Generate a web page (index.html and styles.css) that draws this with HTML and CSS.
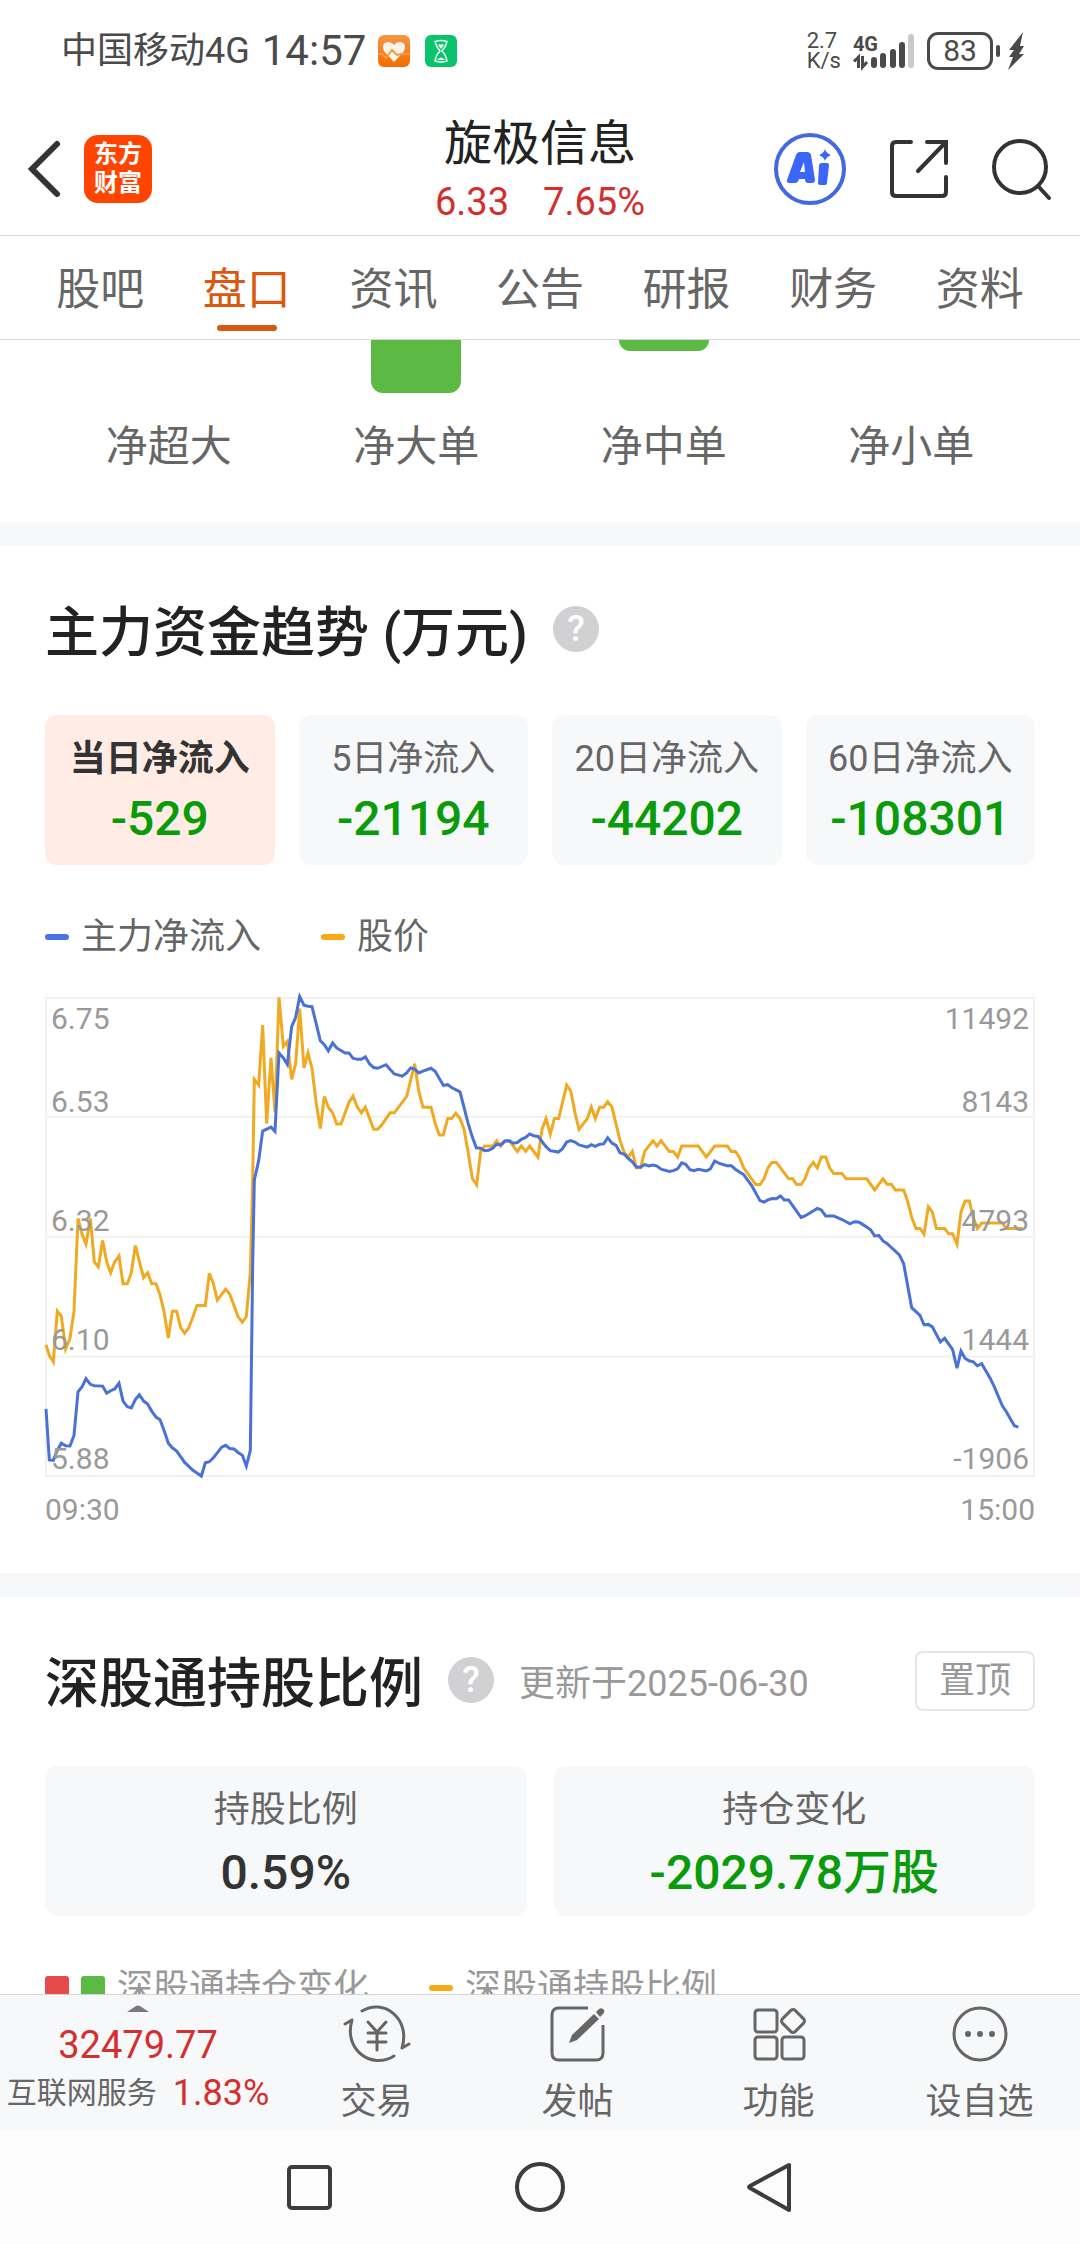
FILE: index.html
```html
<!DOCTYPE html>
<html lang="zh-CN">
<head>
<meta charset="utf-8">
<meta name="viewport" content="width=device-width, initial-scale=1">
<title>旋极信息</title>
<link rel="stylesheet" href="styles.css">
</head>
<body>
<div class="app">
  <div class="status">
    <div class="status-left">
      <span class="carrier">中国移动4G</span>
      <time class="clock">14:57</time>
      <svg class="notice" viewBox="0 0 32 32" aria-hidden="true">
        <defs><linearGradient id="heat" x1="0" y1="0" x2="0" y2="1"><stop offset="0" stop-color="#f79646"/><stop offset="1" stop-color="#f46c00"/></linearGradient></defs>
        <rect width="32" height="32" rx="6" fill="url(#heat)"/>
        <path d="M16 27 7 17.500C2.500 11.500 6 7 10 7c3 0 5 1.500 6 3 1-1.500 3-3 6-3 4 0 7.500 4.500 3 10.500z" fill="#fbf3ea"/>
        <path d="M0 19h4l4 4 6-8 5 5 4-1h9" fill="none" stroke="#f79a3c" stroke-width="2"/>
      </svg>
      <svg class="notice" viewBox="0 0 32 32" aria-hidden="true">
        <rect width="32" height="32" rx="6" fill="#0ac46c"/>
        <path d="M10 6.500q6-2 12 0-1 5-5 9.500 4 4 5 10-6 2-12 0 1-6 5-10-4-4.500-5-9.500z" fill="none" stroke="#eafff2" stroke-width="1.500"/>
        <path d="m13 10 3 4 3-4-2-1-1 1-1-1zM12 25q4-5 8 0z" fill="#eafff2"/>
      </svg>
    </div>
    <div class="status-right">
      <div class="speed"><span>2.7</span><span>K/s</span></div>
      <div class="network">
        <div class="network-type"><span>4G</span>
          <svg class="arrows" viewBox="0 0 16 12" aria-hidden="true"><path d="M5.500 12V1L1 5.500M9.500 0v11L14 6" fill="none" stroke="#4a4a4a" stroke-width="3"/></svg>
        </div>
        <svg class="bars" viewBox="0 0 44 36" aria-hidden="true"><g fill="#4a4a4a"><rect x="0" y="24" width="6" height="11" rx="3"/><rect x="9" y="20" width="6" height="15" rx="3"/><rect x="19" y="16" width="6" height="19" rx="3"/><rect x="28" y="9" width="6" height="26" rx="3"/></g><rect x="37" y="1" width="6" height="34" rx="3" fill="#c9c9c9"/></svg>
      </div>
      <div class="power">
        <span class="battery">83</span><span class="nub"></span>
        <svg class="bolt" viewBox="0 0 17 38" aria-hidden="true"><path d="M15 0 1 18h5L1 25h4L0 38 16 22h-5l5-8h-4z" fill="#4a4a4a"/></svg>
      </div>
    </div>
  </div>

  <header class="header">
    <div class="header-side">
      <button class="icon-button" type="button" aria-label="返回"><svg class="back" viewBox="0 0 32 56"><path d="M29 3 4 28l25 25" fill="none" stroke="#333" stroke-width="6" stroke-linecap="round"/></svg></button>
      <a class="brand" href="#home">东方<br>财富</a>
    </div>
    <div class="title">
      <h1>旋极信息</h1>
      <p class="quote up"><span>6.33</span><span>7.65%</span></p>
    </div>
    <div class="header-side header-actions">
      <button class="icon-button" type="button" aria-label="智能助手"><svg class="assistant" viewBox="0 0 72 72">
        <circle cx="36" cy="36" r="34" fill="none" stroke="#4468e2" stroke-width="4"/>
        <path fill="#3a66fc" fill-rule="evenodd" d="M22 22q1-3 4-3h7q3 0 4 3l4 25q0 3-3 3h-4q-3 0-3-4h-6q-1 4-4 4h-5q-4 0-3-3zM26 39h5l-1-10zM48 30h5q2 0 2 2l-2 18q0 2-2 2h-5q-2 0-2-2l1-17q0-3 3-3zM51 16q1 4 6 6-5 2-6 6-1-4-6-6 5-2 6-6z"/>
      </svg></button>
      <button class="icon-button" type="button" aria-label="分享"><svg class="share" viewBox="0 0 58 58"><path d="M21 2H6Q2 2 2 6v46q0 4 4 4h46q4 0 4-4V37M37 2h19v21M55 3 28 31" fill="none" stroke="#333" stroke-width="4" stroke-linecap="round"/></svg></button>
      <button class="icon-button" type="button" aria-label="搜索"><svg class="search" viewBox="0 0 60 62"><circle cx="28" cy="29" r="26" fill="none" stroke="#333" stroke-width="4"/><path d="m46 48 11 12" stroke="#333" stroke-width="4" stroke-linecap="round"/></svg></button>
    </div>
  </header>

  <nav class="tabs" aria-label="个股栏目">
    <a href="#guba">股吧</a>
    <a class="active" href="#pankou" aria-current="page">盘口</a>
    <a href="#zixun">资讯</a>
    <a href="#gonggao">公告</a>
    <a href="#yanbao">研报</a>
    <a href="#caiwu">财务</a>
    <a href="#ziliao">资料</a>
  </nav>

  <main class="content">
    <section class="orders" aria-label="净单">
      <div class="order"><div class="order-slot"></div><span>净超大</span></div>
      <div class="order"><div class="order-slot"><i class="order-bar" style="height:100%"></i></div><span>净大单</span></div>
      <div class="order"><div class="order-slot"><i class="order-bar" style="height:21%"></i></div><span>净中单</span></div>
      <div class="order"><div class="order-slot"></div><span>净小单</span></div>
    </section>

    <section class="panel">
      <div class="panel-head">
        <h2>主力资金趋势 (万元)</h2>
        <button class="help" type="button" aria-label="说明">?</button>
      </div>
      <div class="cards cards-four">
        <button class="card selected" type="button"><span class="card-label">当日净流入</span><span class="card-value down">-529</span></button>
        <button class="card" type="button"><span class="card-label">5日净流入</span><span class="card-value down">-21194</span></button>
        <button class="card" type="button"><span class="card-label">20日净流入</span><span class="card-value down">-44202</span></button>
        <button class="card" type="button"><span class="card-label">60日净流入</span><span class="card-value down">-108301</span></button>
      </div>
      <div class="legend">
        <span class="legend-item"><i class="dash blue"></i>主力净流入</span>
        <span class="legend-item"><i class="dash amber"></i>股价</span>
      </div>
      <div class="chart">
        <svg class="plot" viewBox="48 50 2964 1340" preserveAspectRatio="none" role="img" aria-label="主力净流入与股价走势">
          <path class="grid" d="M48 50H3012V1390H48zM48 383H3012M48 719H3012M48 1055H3012"/>
          <polyline class="line price" points="48,1022 58,1052 70,1070 82,928 94,942 107,1034 120,1004 132,928 144,668 156,712 168,740 181,668 193,790 205,804 218,730 230,790 242,820 254,790 267,773 279,851 292,851 304,820 316,744 328,788 341,834 353,820 365,851 378,851 390,882 402,928 415,1003 427,928 440,928 452,974 464,990 476,975 489,943 501,912 526,912 538,822 550,851 562,897 587,866 599,880 624,943 637,959 649,943 661,820 668,560 673,278 686,294 698,126 710,402 723,218 735,370 747,48 760,186 772,172 785,278 797,234 809,80 822,246 834,204 846,248 858,340 871,416 883,326 895,356 908,372 920,403 933,403 957,342 969,325 982,356 994,372 1006,356 1031,418 1043,418 1055,406 1080,372 1093,372 1130,326 1154,234 1166,310 1179,356 1203,356 1216,403 1228,434 1240,434 1253,388 1265,388 1277,373 1290,388 1302,418 1314,480 1327,556 1340,574 1352,480 1364,465 1388,465 1400,450 1412,465 1425,450 1438,450 1462,480 1474,465 1487,480 1499,465 1524,496 1536,418 1548,388 1561,432 1573,388 1586,388 1610,294 1622,310 1635,372 1647,418 1672,388 1684,356 1696,388 1709,356 1721,356 1733,341 1746,356 1770,450 1783,484 1795,496 1807,480 1819,526 1832,526 1844,480 1869,450 1881,465 1893,450 1918,480 1930,480 1943,496 1955,465 2005,465 2029,496 2054,465 2092,465 2104,480 2116,480 2128,496 2141,526 2177,573 2190,573 2202,557 2214,526 2226,511 2239,511 2276,557 2288,557 2300,573 2313,573 2325,557 2337,526 2350,511 2362,526 2374,496 2387,496 2399,526 2411,542 2436,542 2448,557 2510,557 2534,588 2559,557 2571,572 2584,572 2596,588 2621,588 2633,620 2645,665 2658,696 2670,696 2682,712 2695,635 2707,650 2719,696 2744,696 2756,711 2768,711 2781,740 2793,650 2805,619 2818,619 2830,666 2842,696 2855,681 2917,681 2929,696 2978,696"/>
          <polyline class="line flow" points="48,1202 58,1345 70,1346 82,1318 94,1298 107,1305 120,1306 132,1276 144,1154 156,1140 168,1117 181,1133 193,1137 218,1138 230,1158 242,1151 254,1146 267,1130 279,1180 292,1196 304,1199 316,1176 328,1162 341,1180 353,1188 365,1208 378,1225 390,1232 402,1262 415,1298 427,1311 440,1320 464,1352 489,1374 514,1390 526,1353 538,1350 550,1339 575,1309 587,1304 599,1313 612,1314 624,1324 637,1332 649,1362 661,1318 668,800 673,560 686,506 698,423 723,412 735,424 747,204 760,218 772,236 785,130 797,104 809,46 822,70 834,73 846,74 858,120 871,170 883,181 895,198 908,176 920,190 945,204 957,204 969,219 982,222 994,222 1006,215 1019,235 1031,245 1043,247 1068,237 1080,250 1093,263 1117,269 1130,260 1142,246 1154,249 1166,260 1179,255 1203,247 1216,256 1240,295 1253,293 1265,301 1290,313 1314,400 1327,440 1339,470 1352,471 1364,478 1376,477 1388,471 1400,460 1412,462 1425,451 1438,450 1450,457 1462,455 1474,446 1487,441 1499,431 1511,436 1524,438 1548,467 1561,478 1585,482 1597,473 1610,454 1622,450 1635,454 1647,462 1672,468 1684,461 1696,466 1709,460 1721,459 1733,442 1746,457 1758,463 1770,484 1783,488 1795,500 1807,509 1819,524 1832,524 1844,517 1856,521 1869,518 1881,521 1893,530 1918,536 1930,534 1943,529 1955,512 1967,516 1980,531 1992,534 2005,530 2029,535 2041,529 2054,507 2066,513 2091,520 2104,520 2116,530 2128,538 2141,545 2165,576 2190,618 2202,622 2214,616 2226,612 2239,613 2251,605 2263,616 2276,616 2288,632 2313,665 2325,661 2362,640 2374,644 2387,661 2411,661 2436,671 2460,683 2473,677 2485,678 2497,684 2522,700 2534,717 2547,716 2559,731 2571,738 2608,770 2621,795 2645,918 2670,940 2682,966 2695,965 2707,972 2731,1014 2744,1004 2768,1036 2781,1088 2793,1040 2805,1060 2817,1067 2830,1070 2842,1081 2855,1075 2880,1115 2892,1138 2917,1193 2929,1210 2953,1249 2965,1253"/>
        </svg>
        <div class="axis">
          <div class="axis-row"><span>6.75</span><span>6.53</span></div>
          <div class="axis-row"><span>6.32</span></div>
          <div class="axis-row"><span>6.10</span></div>
          <div class="axis-row"><span>5.88</span></div>
        </div>
        <div class="axis axis-right">
          <div class="axis-row"><span>11492</span><span>8143</span></div>
          <div class="axis-row"><span>4793</span></div>
          <div class="axis-row"><span>1444</span></div>
          <div class="axis-row"><span>-1906</span></div>
        </div>
      </div>
      <div class="times"><span>09:30</span><span>15:00</span></div>
    </section>

    <section class="panel">
      <div class="panel-head">
        <h2>深股通持股比例</h2>
        <button class="help" type="button" aria-label="说明">?</button>
        <span class="updated">更新于2025-06-30</span>
        <button class="pin" type="button">置顶</button>
      </div>
      <div class="cards cards-two">
        <div class="card"><span class="card-label">持股比例</span><span class="card-value">0.59%</span></div>
        <div class="card"><span class="card-label">持仓变化</span><span class="card-value down">-2029.78万股</span></div>
      </div>
      <div class="legend legend-holding">
        <span class="legend-item"><i class="square red"></i><i class="square green"></i>深股通持仓变化</span>
        <span class="legend-item"><i class="dash amber"></i>深股通持股比例</span>
      </div>
    </section>
  </main>

  <footer class="toolbar">
    <button class="index" type="button">
      <svg class="caret" viewBox="0 0 22 7" aria-hidden="true"><path d="m0 7 9-6q2-1 4 0l9 6z" fill="#7b7b7d"/></svg>
      <span class="index-value up">32479.77</span>
      <span class="index-line">互联网服务<b class="index-change up">1.83%</b></span>
    </button>
    <button class="tool" type="button">
      <svg viewBox="0 0 66 60" aria-hidden="true"><g fill="none" stroke="#666" stroke-width="3" stroke-linecap="round" stroke-linejoin="round"><path d="M18 7C39-6 67 14 58 44l7-4M50 52C28 66-1 46 8 16l-7 4"/><path d="m24 18 9 10 9-10M33 28v18M24 29h18M24 38h18"/></g></svg>
      <span>交易</span>
    </button>
    <button class="tool" type="button">
      <svg viewBox="0 0 66 60" aria-hidden="true"><path d="M43 4H14q-7 0-7 7v38q0 7 7 7h37q7 0 7-7V21" fill="none" stroke="#666" stroke-width="3"/><path d="m24 39 3-8 22-21 5 5-22 21zM51 8l3-3q3-2 5 1 1 2-1 4l-3 3z" fill="#666"/></svg>
      <span>发帖</span>
    </button>
    <button class="tool" type="button">
      <svg viewBox="0 0 66 60" aria-hidden="true"><g fill="none" stroke="#666" stroke-width="3"><rect x="9" y="6" width="22" height="22" rx="3"/><rect x="9" y="33" width="22" height="22" rx="3"/><rect x="36" y="33" width="22" height="22" rx="3"/><rect x="-9" y="-9" width="18" height="18" rx="3" transform="translate(47 17) rotate(45)"/></g></svg>
      <span>功能</span>
    </button>
    <button class="tool" type="button">
      <svg viewBox="0 0 66 60" aria-hidden="true"><circle cx="33" cy="30" r="26" fill="none" stroke="#666" stroke-width="3"/><g fill="#666"><circle cx="21" cy="30" r="3"/><circle cx="33" cy="30" r="3"/><circle cx="45" cy="30" r="3"/></g></svg>
      <span>设自选</span>
    </button>
  </footer>

  <div class="system">
    <button class="icon-button" type="button" aria-label="最近任务"><svg viewBox="0 0 54 54"><rect x="6" y="7" width="41" height="41" rx="3" fill="none" stroke="#3c3c3c" stroke-width="4"/></svg></button>
    <button class="icon-button" type="button" aria-label="主屏幕"><svg viewBox="0 0 54 54"><circle cx="27" cy="27" r="23" fill="none" stroke="#3c3c3c" stroke-width="4"/></svg></button>
    <button class="icon-button" type="button" aria-label="返回上一级"><svg viewBox="0 0 54 54"><path d="M46 5v45L7 28q-2-1 0-2z" fill="none" stroke="#3c3c3c" stroke-width="4" stroke-linejoin="round"/></svg></button>
  </div>
</div>
</body>
</html>
```
FILE: styles.css
```css
* {
  box-sizing: border-box;
}

body {
  margin: 0;
  color: #333;
  background: #fff;
  font-family: Roboto, "Noto Sans CJK SC", sans-serif;
  font-size: 36px;
  line-height: 44px;
}

h1, h2, p {
  margin: 0;
  font-weight: 400;
}

svg {
  display: block;
  overflow: visible;
}

button {
  margin: 0;
  padding: 0;
  border: 0;
  background: none;
  color: inherit;
  font: inherit;
}

a {
  color: inherit;
  text-decoration: none;
}

.up { color: #d32f2f; }
.down { color: #0a9b0a; }

.app {
  display: flex;
  flex-direction: column;
  height: 100vh;
}

.status, .header, .tabs, .toolbar, .system {
  flex: none;
}

/* Device status bar */
.status {
  display: flex;
  justify-content: space-between;
  align-items: center;
  height: 100px;
  padding: 2px 55px 0 61px;
  color: #4a4a4a;
}

.status-left, .status-right, .power, .network {
  display: flex;
  align-items: center;
}

.clock {
  margin: 0 12px;
  font-size: 42px;
}

.notice {
  width: 32px;
  height: 32px;
  margin-right: 15px;
}

.status-right {
  gap: 12px;
}

.speed, .network-type {
  display: flex;
  flex-direction: column;
  font-size: 22px;
  line-height: 20px;
}

.network-type {
  font-size: 20px;
  font-weight: 700;
}

.arrows {
  width: 16px;
  height: 12px;
  margin-top: 2px;
}

.bars {
  width: 44px;
  height: 36px;
  margin-left: -7px;
}

.battery {
  width: 66px;
  height: 38px;
  border: 3px solid #4a4a4a;
  border-radius: 11px;
  font-size: 30px;
  line-height: 32px;
  text-align: center;
}

.nub {
  width: 4px;
  height: 12px;
  margin: 0 8px 0 3px;
  border-radius: 2px;
  background: #4a4a4a;
}

.bolt {
  width: 17px;
  height: 38px;
}

/* Stock header */
.header {
  display: grid;
  grid-template-columns: 1fr auto 1fr;
  align-items: center;
  padding: 11px 28px 9px;
  border-bottom: 1px solid #d3d5d8;
}

.header-side {
  display: flex;
  align-items: center;
  gap: 24px;
}

.header-actions {
  justify-content: flex-end;
  gap: 44px;
}

.back { width: 32px; height: 56px; }
.assistant { width: 72px; height: 72px; }
.share { width: 58px; height: 58px; }
.search { width: 60px; height: 62px; }

.brand {
  width: 68px;
  height: 68px;
  padding: 5px 0;
  border-radius: 14px;
  background: #ff4400;
  color: #fff;
  font-size: 24px;
  font-weight: 700;
  line-height: 29px;
  text-align: center;
}

.title {
  text-align: center;
}

.title h1 {
  color: #222;
  font-size: 48px;
  line-height: 66px;
}

.quote {
  display: flex;
  justify-content: center;
  gap: 34px;
  margin-top: 1px;
  font-size: 38px;
  line-height: 48px;
}

/* Section tabs */
.tabs {
  display: grid;
  grid-template-columns: repeat(7, 1fr);
  padding: 0 27px;
  border-bottom: 1px solid #d3d5d8;
  color: #666;
  font-size: 44px;
  line-height: 60px;
  text-align: center;
}

.tabs a {
  display: flex;
  flex-direction: column;
  align-items: center;
  gap: 5px;
  padding: 24px 0 8px;
}

.tabs a::after {
  width: 60px;
  height: 6px;
  border-radius: 3px;
  content: "";
}

.tabs .active {
  color: #d9590f;
}

.tabs .active::after {
  background: #d9590f;
}

/* Scrolling content */
.content {
  flex: 1;
  min-height: 0;
  overflow: hidden;
}

.orders {
  display: grid;
  grid-template-columns: repeat(4, 1fr);
  padding: 0 45px 45px;
  color: #666;
  font-size: 42px;
  line-height: 60px;
}

.order {
  display: flex;
  flex-direction: column;
  align-items: center;
  gap: 24px;
}

.order-slot {
  width: 90px;
  height: 53px;
}

.order-bar {
  display: block;
  border-radius: 0 0 12px 12px;
  background: #5cb944;
}

.panel {
  padding: 48px 45px 45px;
  border-top: 24px solid #f7f8fa;
}

.panel-head {
  display: flex;
  align-items: flex-start;
}

.panel-head h2 {
  color: #222;
  font-size: 54px;
  font-weight: 500;
  line-height: 80px;
}

.help {
  width: 46px;
  height: 46px;
  margin: 12px 25px 0;
  border-radius: 50%;
  background: #d1d1d4;
  color: #fff;
  font-weight: 500;
}

.updated {
  margin-top: 17px;
  color: #999;
}

.pin {
  margin: 6px 0 0 auto;
  padding: 6px 22px;
  border: 2px solid #e6e6e8;
  border-radius: 8px;
  color: #999;
}

.cards {
  display: grid;
  gap: 24px;
  margin-top: 41px;
}

.cards-four { grid-template-columns: repeat(4, 1fr); }
.cards-two { grid-template-columns: repeat(2, 1fr); gap: 27px; }

.card {
  display: flex;
  flex-direction: column;
  align-items: center;
  gap: 10px;
  padding: 22px 0 18px;
  border-radius: 12px;
  background: #f7f8fa;
  white-space: nowrap;
}

.cards-two .card {
  gap: 13px;
  padding-bottom: 15px;
}

.card-label {
  color: #666;
}

.card-value {
  font-size: 48px;
  font-weight: 500;
  line-height: 56px;
}

.selected {
  background: #ffede5;
}

.selected .card-label {
  color: #333;
  font-weight: 700;
}

.legend {
  display: flex;
  gap: 60px;
  margin-top: 50px;
  color: #666;
}

.legend-holding {
  color: #999;
}

.legend-item {
  display: flex;
  align-items: center;
}

.dash, .square {
  width: 24px;
  height: 6px;
  margin-right: 12px;
  border-radius: 3px;
}

.square {
  height: 24px;
}

.blue { background: #4874e8; }
.amber { background: #f7aa14; }
.red { background: #e64a4a; }
.green { background: #5cb944; }

.chart {
  display: grid;
  margin: 38px 0 15px;
}

.plot, .axis {
  grid-area: 1 / 1;
}

.plot {
  width: 100%;
  height: 480px;
  padding: 1px;
}

.grid {
  fill: none;
  stroke: #f1f1f2;
  stroke-width: 2;
  vector-effect: non-scaling-stroke;
}

.line {
  fill: none;
  stroke-width: 3;
  vector-effect: non-scaling-stroke;
}

.price { stroke: #f0aa22; }
.flow { stroke: #4a72d6; }

.axis {
  display: grid;
  grid-template-rows: repeat(4, 1fr);
  padding: 4px 6px 0;
}

.axis, .times {
  color: #999;
  font-size: 30px;
  line-height: 36px;
}

.axis-right {
  text-align: right;
}

.axis-row {
  display: flex;
  flex-direction: column;
  justify-content: flex-end;
}

.axis-row:first-child {
  justify-content: space-between;
}

.times {
  display: flex;
  justify-content: space-between;
}

/* Bottom toolbar */
.toolbar {
  display: grid;
  grid-template-columns: 276px repeat(4, 1fr);
  border-top: 1px solid #d3d5d8;
  background: #f7f8fa;
  color: #666;
}

.index, .tool {
  display: flex;
  flex-direction: column;
  align-items: center;
}

.index {
  padding: 10px 0 19px;
}

.caret {
  width: 22px;
  height: 7px;
  margin-bottom: 9px;
}

.index-value {
  margin-bottom: 6px;
  font-size: 38px;
  line-height: 48px;
}

.index-line {
  display: flex;
  align-items: center;
  gap: 16px;
  font-size: 30px;
  line-height: 36px;
}

.index-change {
  font-size: 36px;
  font-weight: 400;
}

.tool {
  gap: 16px;
  padding: 9px 0 6px;
}

.tool svg {
  width: 66px;
  height: 60px;
}

/* Device navigation */
.system {
  display: flex;
  justify-content: center;
  align-items: center;
  gap: 176px;
  height: 114px;
  background: #fcfcfc;
}

.system svg {
  width: 54px;
  height: 54px;
}
```
